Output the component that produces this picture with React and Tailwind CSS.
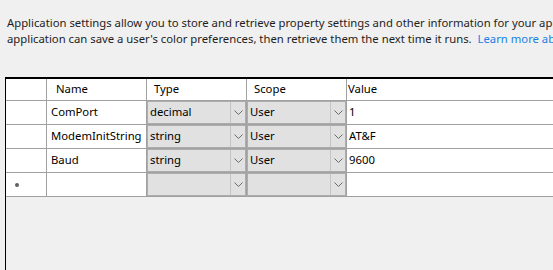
import React from "react";

function Chevron() {
  return (
    <svg width="9" height="5" viewBox="0 0 9 5">
      <path d="M0.5 0.5 L4.5 4.5 L8.5 0.5" fill="none" stroke="#6a6a6a" strokeWidth="1" />
    </svg>
  );
}

function Combo({ text }) {
  return (
    <div className="w-[100px] h-full shrink-0 border-r border-[#a0a0a0]">
      <div className="h-full flex bg-[#e1e1e1] border border-[#adadad]">
        <div className="flex-1 pl-[2px] flex items-center whitespace-nowrap">{text}</div>
        <div className="w-[15px] border-l border-[#c4c4c4] flex items-center justify-center">
          <Chevron />
        </div>
      </div>
    </div>
  );
}

function Row({ name, type, scope, value, isNew }) {
  return (
    <div className="flex h-[24px] border-b border-[#a0a0a0] bg-white">
      <div className="w-[41px] shrink-0 border-r border-[#a0a0a0] flex items-center pl-[9px]">
        {isNew && <div className="w-[4px] h-[4px] rounded-full bg-[#606060]" />}
      </div>
      <div className="w-[100px] shrink-0 border-r border-[#a0a0a0] flex items-center pl-[4px] whitespace-nowrap">
        {name}
      </div>
      <Combo text={type} />
      <Combo text={scope} />
      <div className="flex-1 flex items-center pl-[2px] whitespace-nowrap">{value}</div>
    </div>
  );
}

export default function App() {
  const rows = [
    { name: "ComPort", type: "decimal", scope: "User", value: "1" },
    { name: "ModemInitString", type: "string", scope: "User", value: "AT&F" },
    { name: "Baud", type: "string", scope: "User", value: "9600" },
  ];
  return (
    <div className="w-[553px] h-[270px] overflow-hidden bg-[#f0f0f0] flex flex-col font-['Noto_Sans',sans-serif] text-[11.3px] text-black">
      <div className="pl-[7px] pt-[15px] leading-[16px] text-[#1e1e1e]">
        <div className="whitespace-nowrap">
          Application settings allow you to store and retrieve property settings and other information for your application dynamically. For example, the
        </div>
        <div className="whitespace-nowrap">
          application can save a user's color preferences, then retrieve them the next time it runs.{"\u00a0\u00a0"}
          <span className="text-[#1a7fe6]">Learn more about application settings</span>
        </div>
      </div>
      <div className="mt-[30px] ml-[5px] flex-1 border-t-2 border-l border-black">
        <div className="flex h-[22px] border-b border-[#a0a0a0] bg-white">
          <div className="w-[41px] shrink-0 border-r border-[#a0a0a0]" />
          <div className="w-[100px] shrink-0 border-r border-[#a0a0a0] flex items-center pl-[9px]">Name</div>
          <div className="w-[100px] shrink-0 border-r border-[#a0a0a0] flex items-center pl-[7px]">Type</div>
          <div className="w-[100px] shrink-0 border-r border-[#a0a0a0] flex items-center pl-[7px]">Scope</div>
          <div className="flex-1 flex items-center pl-[1px]">Value</div>
        </div>
        {rows.map((r) => (
          <Row key={r.name} {...r} />
        ))}
        <Row isNew name="" type="" scope="" value="" />
      </div>
    </div>
  );
}
